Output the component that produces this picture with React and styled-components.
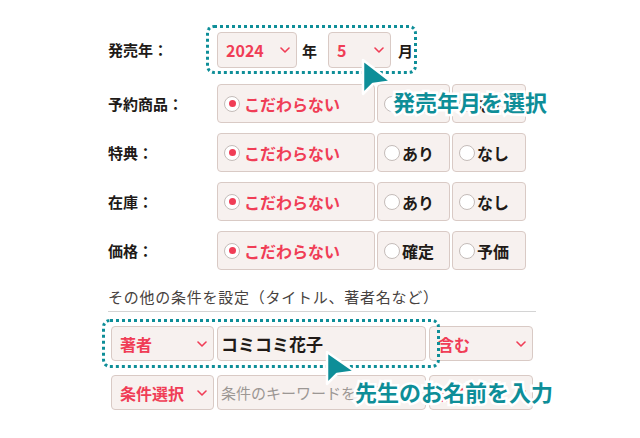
import React from "react";
import styled, { createGlobalStyle } from "styled-components";

const GlobalStyle = createGlobalStyle`
  html, body { margin: 0; padding: 0; background: #fff; }
  * { box-sizing: border-box; }
`;

const FONT = `"Noto Sans CJK JP", "Noto Sans", sans-serif`;
const RED = "#f03d56";
const TEAL = "#0e8e98";
const INK = "#211a17";
const FIELD_BG = "#f7f1ef";
const FIELD_LINE = "#d9cac5";

const Page = styled.div`
  position: relative;
  width: 640px;
  height: 438px;
  overflow: hidden;
  padding: 32px 0 0 108px;
  font-family: ${FONT};
  color: ${INK};
`;

const Fields = styled.div`
  display: flex;
  flex-direction: column;
  gap: 10px;
`;

const FieldRow = styled.div`
  display: grid;
  grid-template-columns: 109px auto;
  align-items: center;
  height: ${(p) => p.$h}px;
  margin-bottom: ${(p) => p.$after || 0}px;
`;

const Label = styled.div`
  font-size: 15px;
  font-weight: 700;
  line-height: 20px;
  white-space: nowrap;
`;

const DateControls = styled.div`
  display: flex;
  align-items: center;
  height: 100%;
`;

const Unit = styled.span`
  font-size: 15px;
  font-weight: 700;
  margin: ${(p) => p.$margin};
`;

const SelectBox = styled.div`
  display: flex;
  align-items: center;
  justify-content: space-between;
  width: ${(p) => p.$w}px;
  height: ${(p) => p.$h}px;
  padding: 0 6px 0 ${(p) => p.$pl || 8}px;
  background: ${FIELD_BG};
  border: 1px solid ${FIELD_LINE};
  border-radius: 4px;
  color: ${RED};
  font-size: 16px;
  font-weight: 700;
  white-space: nowrap;
`;

const Options = styled.div`
  display: flex;
  gap: 2px;
  height: 100%;
`;

const Option = styled.div`
  display: flex;
  align-items: center;
  gap: ${(p) => (p.$wide ? 4 : 2)}px;
  width: ${(p) => p.$w}px;
  height: 100%;
  padding-left: 6px;
  background: ${FIELD_BG};
  border: 1px solid ${FIELD_LINE};
  border-radius: 4px;
  color: ${(p) => (p.$on ? RED : INK)};
  font-size: 16px;
  font-weight: 700;
  white-space: nowrap;
`;

const RadioDot = styled.span`
  position: relative;
  flex: none;
  width: 16px;
  height: 16px;
  border-radius: 50%;
  background: #fff;
  border: 1px solid #c4bcb9;
  &::after {
    content: "";
    display: ${(p) => (p.$on ? "block" : "none")};
    position: absolute;
    left: 3.5px;
    top: 3.5px;
    width: 7px;
    height: 7px;
    border-radius: 50%;
    background: ${RED};
  }
`;

const SectionTitle = styled.div`
  width: 428px;
  margin-top: 17px;
  padding-bottom: 4px;
  border-bottom: 1px solid #d4d4d4;
  font-size: 15px;
  line-height: 20px;
  letter-spacing: 0.75px;
  color: #474240;
  white-space: nowrap;
`;

const SearchRows = styled.div`
  display: flex;
  flex-direction: column;
  gap: 14px;
  margin-top: 14px;
  padding-left: 3px;
`;

const SearchRow = styled.div`
  display: grid;
  grid-template-columns: 103px 209px 104px;
  column-gap: 3px;
  height: 35px;
`;

const KeywordInput = styled.input`
  width: 100%;
  height: 100%;
  margin: 0;
  padding: 0 0 0 3px;
  background: ${FIELD_BG};
  border: 1px solid ${FIELD_LINE};
  border-radius: 4px;
  font-family: ${FONT};
  font-size: ${(p) => (p.value ? 17 : 15)}px;
  font-weight: ${(p) => (p.value ? 700 : 400)};
  color: ${INK};
  outline: none;
  &::placeholder {
    color: #9c9794;
  }
`;

/* annotation layer: dotted highlight frames, pointer arrows and callouts */
const Frame = styled.div`
  position: absolute;
  left: ${(p) => p.$x}px;
  top: ${(p) => p.$y}px;
  width: ${(p) => p.$w}px;
  height: ${(p) => p.$h}px;
  border: 3px dotted ${TEAL};
  border-radius: 8px;
  pointer-events: none;
`;

const PointerSvg = styled.svg`
  position: absolute;
  left: ${(p) => p.$x - 3}px;
  top: ${(p) => p.$y - 3}px;
  overflow: visible;
`;

const Callout = styled.div`
  position: absolute;
  left: ${(p) => p.$x}px;
  top: ${(p) => p.$y}px;
  font-size: 22px;
  font-weight: 700;
  line-height: 24px;
  color: ${TEAL};
  white-space: nowrap;
  -webkit-text-stroke: 5px #fff;
  paint-order: stroke fill;
`;

const Chevron = () => (
  <svg width="10" height="6" viewBox="0 0 10 6">
    <polyline
      points="1,1 5,5 9,1"
      fill="none"
      stroke={RED}
      strokeWidth="1.6"
      strokeLinecap="round"
      strokeLinejoin="round"
    />
  </svg>
);

const Pointer = ({ x, y, h }) => (
  <PointerSvg $x={x} $y={y} width="34" height={h + 6} viewBox={`0 0 34 ${h + 6}`}>
    <path
      d={`M3 3 L3 ${h + 3} L13 ${h - 7} L31 ${h - 9.5} Z`}
      fill={TEAL}
      stroke="#fff"
      strokeWidth="2.5"
      strokeLinejoin="round"
    />
  </PointerSvg>
);

const Select = ({ children, w, h, pl }) => (
  <SelectBox $w={w} $h={h} $pl={pl}>
    <span>{children}</span>
    <Chevron />
  </SelectBox>
);

const choiceRows = [
  { label: "予約商品：", choices: ["あり", "なし"] },
  { label: "特典：", choices: ["あり", "なし"] },
  { label: "在庫：", choices: ["あり", "なし"] },
  { label: "価格：", choices: ["確定", "予価"] },
];

export default function App() {
  return (
    <>
      <GlobalStyle />
      <Page>
        <Fields>
          <FieldRow $h={36} $after={6}>
            <Label>発売年：</Label>
            <DateControls>
              <Select w={80} h={36}>2024</Select>
              <Unit $margin="0 11px 0 5px">年</Unit>
              <Select w={63} h={36}>5</Select>
              <Unit $margin="0 0 0 7px">月</Unit>
            </DateControls>
          </FieldRow>

          {choiceRows.map((row) => (
            <FieldRow key={row.label} $h={39}>
              <Label>{row.label}</Label>
              <Options>
                <Option $w={158} $on $wide>
                  <RadioDot $on />
                  こだわらない
                </Option>
                <Option $w={73}>
                  <RadioDot />
                  {row.choices[0]}
                </Option>
                <Option $w={74}>
                  <RadioDot />
                  {row.choices[1]}
                </Option>
              </Options>
            </FieldRow>
          ))}
        </Fields>

        <SectionTitle>その他の条件を設定（タイトル、著者名など）</SectionTitle>

        <SearchRows>
          <SearchRow>
            <Select w={103} h={35}>著者</Select>
            <KeywordInput value="コミコミ花子" readOnly />
            <Select w={104} h={35}>含む</Select>
          </SearchRow>
          <SearchRow>
            <Select w={103} h={35}>条件選択</Select>
            <KeywordInput placeholder="条件のキーワードを入力" />
            <Select w={104} h={35}>含む</Select>
          </SearchRow>
        </SearchRows>

        <Frame $x={206} $y={25} $w={211} $h={49} />
        <Pointer x={363} y={60} h={34} />
        <Callout $x={393} $y={89}>発売年月を選択</Callout>

        <Frame $x={102} $y={319} $w={338} $h={49} />
        <Pointer x={327} y={352} h={32} />
        <Callout $x={355} $y={379}>先生のお名前を入力</Callout>
      </Page>
    </>
  );
}
